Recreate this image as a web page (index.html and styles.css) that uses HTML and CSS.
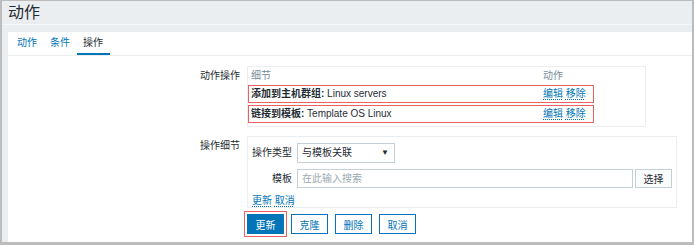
FILE: index.html
```html
<!DOCTYPE html>
<html lang="zh-CN">
<head>
  <meta charset="UTF-8" />
  <title>动作 – 操作</title>
  <link rel="stylesheet" href="styles.css">
</head>
<body>
  <div class="frame">
    <header class="page-head">
      <h1>动作</h1>
    </header>

    <div class="panel">
      <ul class="tabs">
        <li class="tab">动作</li>
        <li class="tab">条件</li>
        <li class="tab active">操作</li>
      </ul>

      <div class="form">
        <div class="form-label">动作操作</div>
        <div class="form-field">
          <div class="list-box">
            <div class="op-table">
              <div class="op-head">
                <span class="op-detail">细节</span>
                <span class="op-action">动作</span>
              </div>
              <div class="op-row marked">
                <span class="op-detail"><b>添加到主机群组:</b> Linux servers</span>
                <span class="op-action"><a class="link">编辑</a> <a class="link">移除</a></span>
              </div>
              <div class="op-row marked">
                <span class="op-detail"><b>链接到模板:</b> Template OS Linux</span>
                <span class="op-action"><a class="link">编辑</a> <a class="link">移除</a></span>
              </div>
            </div>
          </div>
        </div>

        <div class="form-label">操作细节</div>
        <div class="form-field">
          <div class="detail-box">
            <div class="sub-form">
              <div class="sub-label">操作类型</div>
              <div class="sub-field">
                <div class="select">与模板关联<span class="caret">▼</span></div>
              </div>
              <div class="sub-label">模板</div>
              <div class="sub-field">
                <div class="search">
                  <div class="search-input">在此输入搜索</div>
                  <button class="btn-grey">选择</button>
                </div>
              </div>
              <div class="sub-links"><a class="link">更新</a> <a class="link">取消</a></div>
            </div>
          </div>
        </div>

        <div class="form-label"></div>
        <div class="form-field buttons">
          <button class="btn primary marked-btn">更新</button>
          <button class="btn">克隆</button>
          <button class="btn">删除</button>
          <button class="btn">取消</button>
        </div>
      </div>
    </div>
  </div>
</body>
</html>
```

FILE: styles.css
```css
* {
  margin: 0; padding: 0; box-sizing: border-box;
}
body {
  font-family: 'Liberation Sans', 'Noto Sans CJK SC', sans-serif;
  font-size: 10px;
  color: #1f2c33;
  background: #fff;
}
.frame {
  width: 694px;
  height: 245px;
  border-style: solid;
  border-color: #bcbcbc;
  border-width: 1px 2px 3px 2px;
  background: #ebeef0;
  display: flex;
  flex-direction: column;
}
.page-head {
  height: 24px;
  padding-left: 6px;
  border-bottom: 1px solid #f5f6f7;
}
.page-head h1 {
  font-size: 16px;
  font-weight: normal;
  line-height: 23px;
  color: #1f2c33;
}
.panel {
  flex: 1;
  margin: 7px 0 0 6px;
  background: #fff;
}

/* Tabs */
.tabs {
  list-style: none;
  display: flex;
  height: 24px;
  padding-left: 3px;
  border-bottom: 1px solid #ebeef0;
}
.tab {
  height: 23px;
  line-height: 21px;
  padding: 0 7px 0 6px;
  color: #0275b8;
  border-bottom: 2px solid transparent;
}
.tab.active {
  color: #1f2c33;
  border-bottom-color: #0275b8;
}

/* Form */
.form {
  display: grid;
  grid-template-columns: 232px auto;
  column-gap: 7px;
  row-gap: 9px;
  padding-top: 10px;
}
.form-label {
  text-align: right;
  line-height: 17px;
  padding-top: 1px;
}
.link {
  color: #0275b8;
  text-decoration: underline dotted;
  text-underline-offset: 2px;
}

.list-box {
  width: 399px;
  border: 1px solid #ebeef0;
  padding-bottom: 3px;
}
.op-table {
  width: 346px;
}
.op-head, .op-row {
  display: flex;
  height: 18px;
  line-height: 16px;
}
.op-head {
  color: #768d99;
  padding-left: 3px;
  line-height: 17px;
}
.op-row {
  padding-left: 2px;
  border: 1px solid transparent;
}
.op-row + .op-row {
  margin-top: 2px;
}
.op-row.marked {
  border-color: #ec5f63;
}
.op-detail {
  flex: 1;
}
.op-action {
  width: 51px;
}
.op-row .op-action {
  width: 50px;
}

.detail-box {
  width: 430px;
  height: 72px;
  border: 1px solid #ebeef0;
  padding: 6px 4px 0;
}
.sub-form {
  display: grid;
  grid-template-columns: 40px auto;
  column-gap: 5px;
  row-gap: 6px;
}
.sub-label {
  text-align: right;
  line-height: 19px;
  white-space: nowrap;
}
.select {
  width: 98px;
  height: 20px;
  border: 1px solid #c5d0d6;
  line-height: 18px;
  padding-left: 4px;
  position: relative;
}
.caret {
  position: absolute;
  right: 5px;
  top: 0;
  font-size: 8px;
  color: #1f2c33;
}
.search {
  display: flex;
  gap: 2px;
}
.search-input {
  width: 336px;
  height: 19px;
  border: 1px solid #c5d0d6;
  line-height: 17px;
  padding-left: 4px;
  color: #9aa9b1;
}
.btn-grey {
  width: 37px;
  height: 19px;
  border: 1px solid #c5d0d6;
  background: #fafbfb;
  font: inherit;
  color: #1f2c33;
}
.sub-links {
  grid-column: 1 / 3;
  line-height: 14px;
}

/* Buttons */
.buttons {
  display: flex;
  gap: 7px;
  padding-top: 0;
  margin-top: -3px;
}
.btn {
  width: 37px;
  height: 20px;
  border: 1px solid #0275b8;
  background: #fff;
  color: #0275b8;
  font: inherit;
}
.btn.primary {
  background: #0275b8;
  color: #fff;
}
.marked-btn {
  outline: 1px solid #ec5f63;
  outline-offset: 2px;
}
```
